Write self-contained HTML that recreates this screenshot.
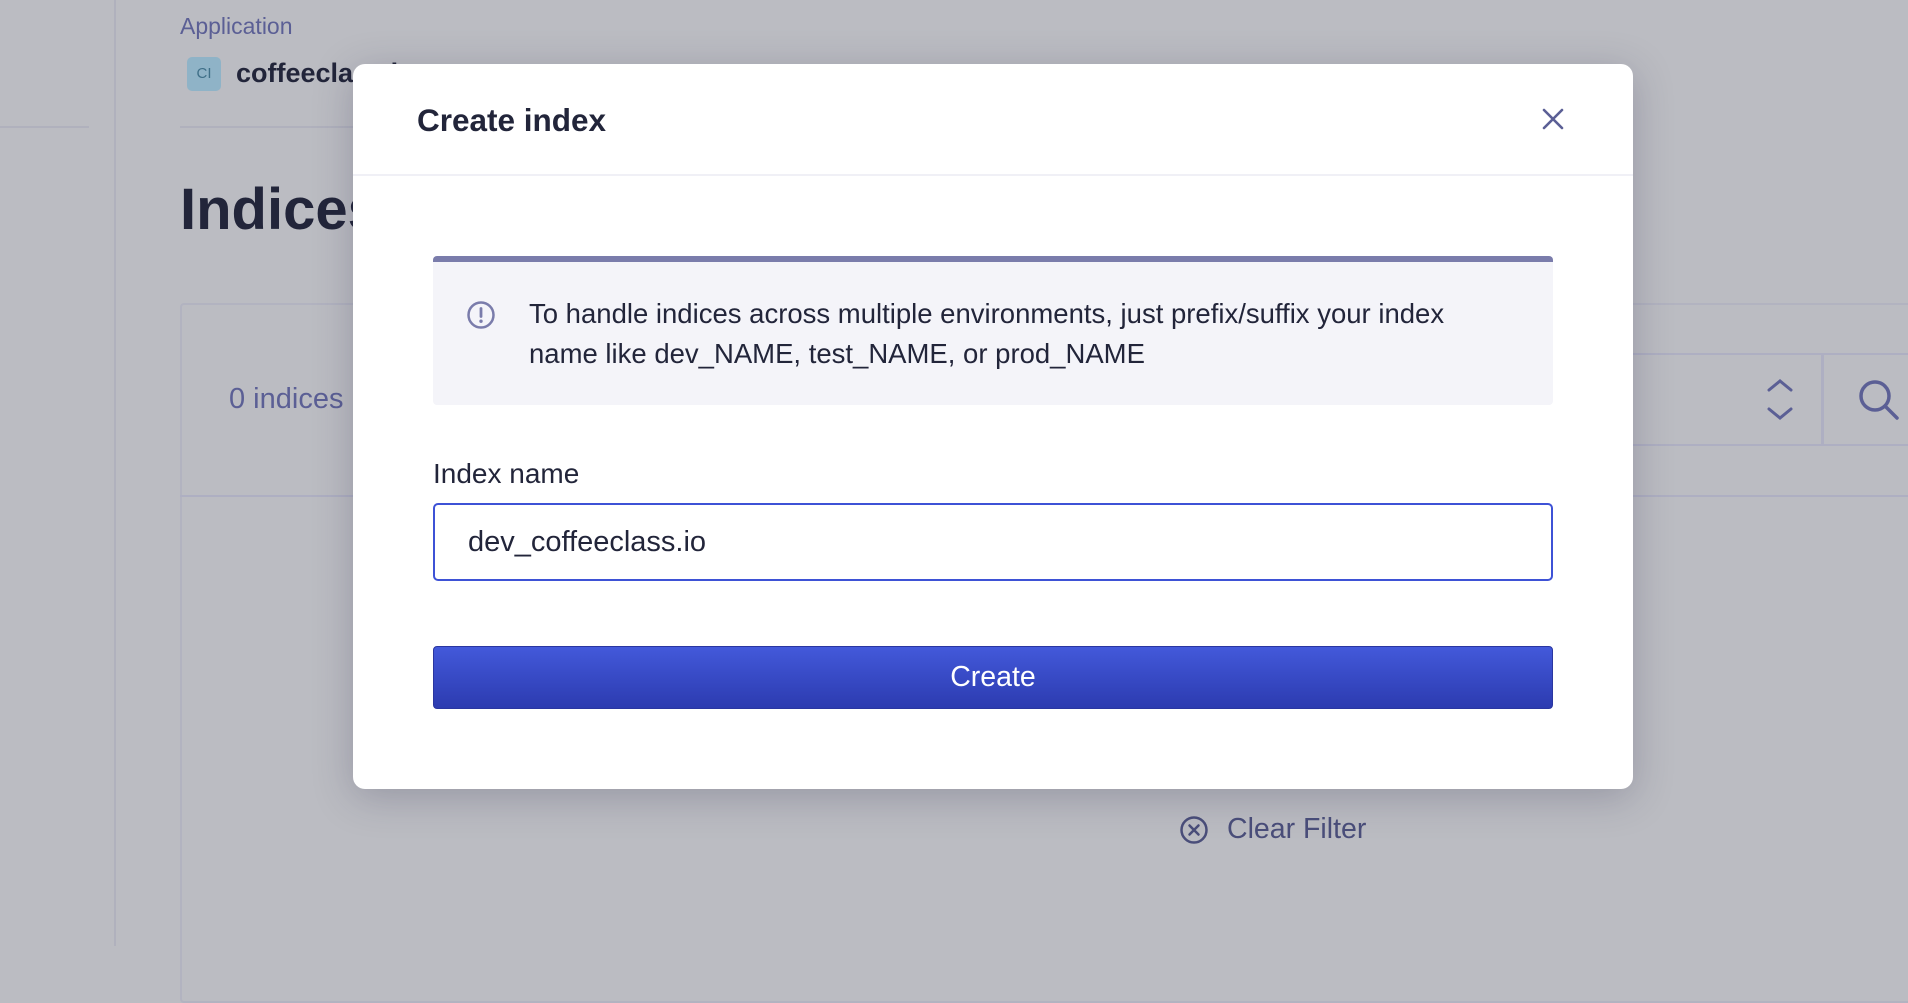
<!DOCTYPE html>
<html><head><meta charset="utf-8"><style>
*{box-sizing:border-box;margin:0;padding:0}
body{width:1908px;height:946px;overflow:hidden;background:#bbbcc2;font-family:"Liberation Sans",sans-serif;position:relative}
.a{position:absolute}
</style></head><body>
<div class="a" style="left:114px;top:0;width:2px;height:946px;background:#b0b1bd"></div>
<div class="a" style="left:0;top:126px;width:89px;height:2px;background:#b0b1bd"></div>
<div class="a" style="left:180px;top:126px;width:400px;height:2px;background:#b0b1bd"></div>
<div class="a" style="left:180px;top:13px;font-size:23px;color:#5b5f95">Application</div>
<div class="a" style="left:187px;top:57px;width:34px;height:34px;border-radius:5px;background:#8fb3c7;color:#3f6f88;font-size:15px;line-height:34px;text-align:center">CI</div>
<div class="a" style="left:236px;top:58px;font-size:27px;font-weight:bold;color:#22253a">coffeeclass.io</div>
<div class="a" style="left:180px;top:176px;font-size:58px;font-weight:bold;color:#22253a">Indices</div>
<div class="a" style="left:180px;top:303px;width:1740px;height:700px;border:2px solid #b2b3c0;border-radius:4px"></div>
<div class="a" style="left:180px;top:495px;width:1740px;height:2px;background:#aeafc2"></div>
<div class="a" style="left:229px;top:383px;font-size:29px;color:#5b5f95">0 indices</div>
<div class="a" style="left:1500px;top:353px;width:323px;height:93px;border:2px solid #aeafc2;border-radius:3px 0 0 3px"></div>
<div class="a" style="left:1822px;top:353px;width:100px;height:93px;border:2px solid #aeafc2"></div>
<svg class="a" style="left:1765px;top:378px" width="30" height="44" viewBox="0 0 30 44"><path d="M4 12 L15 3 L26 12 M4 31 L15 40 L26 31" fill="none" stroke="#5b5f95" stroke-width="3" stroke-linecap="round"/></svg>
<svg class="a" style="left:1857px;top:378px" width="44" height="44" viewBox="0 0 44 44"><circle cx="18" cy="18" r="14" fill="none" stroke="#5b5f95" stroke-width="3.5"/><path d="M28 28 L40 40" stroke="#5b5f95" stroke-width="3.5" stroke-linecap="round"/></svg>
<svg class="a" style="left:1179px;top:815px" width="30" height="30" viewBox="0 0 30 30"><circle cx="15" cy="15" r="12.5" fill="none" stroke="#4a4e7a" stroke-width="2.5"/><path d="M10.5 10.5 L19.5 19.5 M19.5 10.5 L10.5 19.5" stroke="#4a4e7a" stroke-width="2.5" stroke-linecap="round"/></svg>
<div class="a" style="left:1227px;top:813px;font-size:28.5px;color:#4a4e7a">Clear Filter</div>

<div class="a" style="left:353px;top:64px;width:1280px;height:725px;background:#fff;border-radius:12px;box-shadow:0 8px 40px rgba(40,40,70,.25)">
  <div class="a" style="left:64px;top:38px;font-size:31.5px;font-weight:bold;color:#22253a">Create index</div>
  <svg class="a" style="left:1188px;top:43px" width="24" height="24" viewBox="0 0 24 24"><path d="M3 3 L21 21 M21 3 L3 21" stroke="#5b5f95" stroke-width="2.6" stroke-linecap="round"/></svg>
  <div class="a" style="left:0;top:110px;width:1280px;height:2px;background:#f0f0f6"></div>
  <div class="a" style="left:80px;top:192px;width:1120px;height:149px;background:#f4f4f9;border-top:6px solid #7a7cab;border-radius:4px">
    <svg class="a" style="left:33px;top:38px" width="30" height="30" viewBox="0 0 30 30"><circle cx="15" cy="15" r="12.5" fill="none" stroke="#7a7cab" stroke-width="2.5"/><path d="M15 8.5 L15 16.5" stroke="#7a7cab" stroke-width="2.8" stroke-linecap="round"/><circle cx="15" cy="21.2" r="1.7" fill="#7a7cab"/></svg>
    <div class="a" style="left:96px;top:32px;width:960px;font-size:27.5px;line-height:40px;color:#22253a">To handle indices across multiple environments, just prefix/suffix your index name like dev_NAME, test_NAME, or prod_NAME</div>
  </div>
  <div class="a" style="left:80px;top:394px;font-size:28px;color:#22253a">Index name</div>
  <div class="a" style="left:80px;top:439px;width:1120px;height:78px;border:2px solid #3e52d6;border-radius:5px;font-size:29px;line-height:74px;padding-left:33px;color:#22253a">dev_coffeeclass.io</div>
  <div class="a" style="left:80px;top:582px;width:1120px;height:63px;border-radius:4px;background:linear-gradient(#4359da,#2c3bb0);border:1px solid #2a36a0;color:#fff;font-size:28.5px;line-height:61px;text-align:center">Create</div>
</div>
</body></html>
